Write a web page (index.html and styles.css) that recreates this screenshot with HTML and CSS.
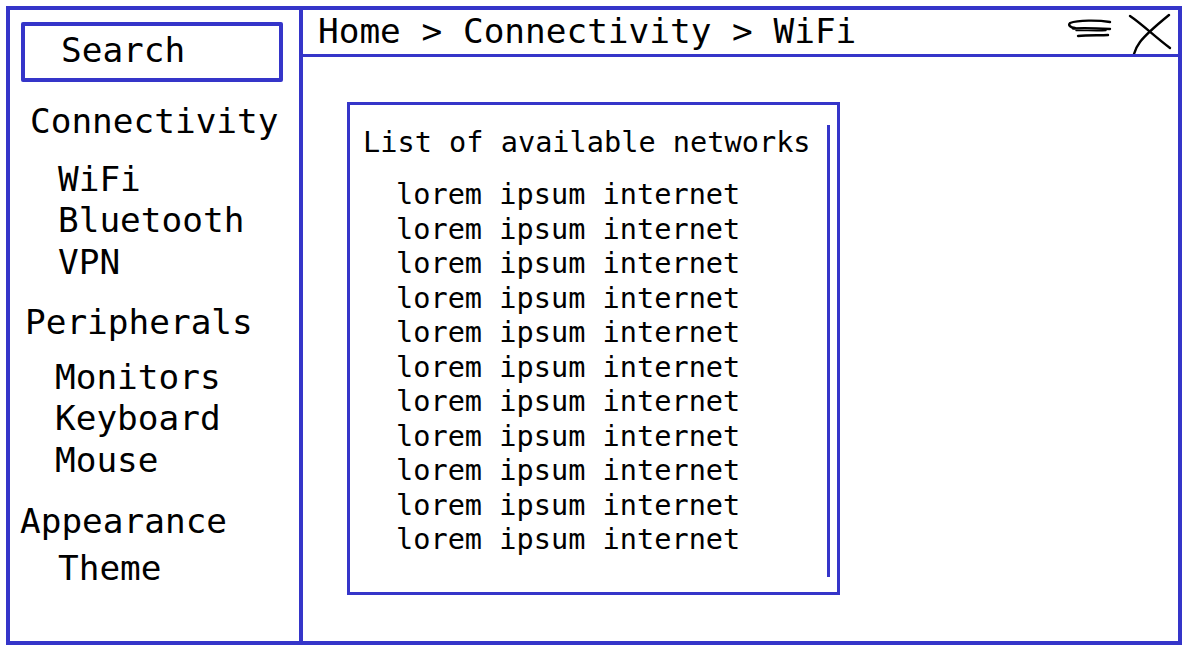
FILE: index.html
```html
<!DOCTYPE html>
<html lang="en">
<head>
<meta charset="utf-8">
<title>Settings - WiFi</title>
<link rel="stylesheet" href="styles.css">
</head>
<body>
<div class="frame">
  <aside class="sidebar">
    <div class="search">Search</div>
    <nav class="nav">
      <div class="group group-conn">
        <div class="group-title">Connectivity</div>
        <ul class="items">
          <li>WiFi</li>
          <li>Bluetooth</li>
          <li>VPN</li>
        </ul>
      </div>
      <div class="group group-peri">
        <div class="group-title">Peripherals</div>
        <ul class="items">
          <li>Monitors</li>
          <li>Keyboard</li>
          <li>Mouse</li>
        </ul>
      </div>
      <div class="group group-appe">
        <div class="group-title">Appearance</div>
        <ul class="items">
          <li>Theme</li>
        </ul>
      </div>
    </nav>
  </aside>
  <main class="main">
    <header class="header">
      <div class="crumbs">Home &gt; Connectivity &gt; WiFi</div>
      <svg class="icons" width="116" height="44" viewBox="0 0 116 44" aria-hidden="true">
        <g fill="none" stroke="#000" stroke-width="2.4" stroke-linecap="round" stroke-linejoin="round">
          <path d="M48 12 C36 10, 16 10, 8 13 C6 15, 8 17.5, 13 18"/>
          <path d="M11 18.5 C22 18, 38 18.5, 48 19"/>
          <path d="M14 20.5 C26 20.5, 36 21, 44 20.5" stroke-width="1.4"/>
          <path d="M16 26 C26 25, 38 25.5, 46 25"/>
          <path d="M68 6 C80 14, 92 26, 108 38"/>
          <path d="M107 5 C96 14, 84 24, 78 32 C75 36, 73 40, 72 44"/>
        </g>
      </svg>
    </header>
    <section class="content">
      <div class="networks">
        <div class="networks-inner">
          <div class="networks-title">List of available networks</div>
          <ul class="network-list">
            <li>lorem ipsum internet</li>
            <li>lorem ipsum internet</li>
            <li>lorem ipsum internet</li>
            <li>lorem ipsum internet</li>
            <li>lorem ipsum internet</li>
            <li>lorem ipsum internet</li>
            <li>lorem ipsum internet</li>
            <li>lorem ipsum internet</li>
            <li>lorem ipsum internet</li>
            <li>lorem ipsum internet</li>
            <li>lorem ipsum internet</li>
          </ul>
        </div>
      </div>
    </section>
  </main>
</div>
</body>
</html>
```

FILE: styles.css
```css
* { box-sizing: border-box; }

html, body {
  margin: 0;
  padding: 0;
  background: #fff;
}

body {
  font-family: "DejaVu Sans Mono", "Liberation Mono", monospace;
  color: #000;
}

ul {
  list-style: none;
  margin: 0;
  padding: 0;
}

.frame {
  margin: 6px 0 0 6px;
  width: 1176px;
  height: 639px;
  border: 4px solid #3535c9;
  display: flex;
}

/* Sidebar */
.sidebar {
  width: 293px;
  flex: none;
  border-right: 4px solid #3535c9;
  padding: 12px 0 0 11px;
  font-size: 34.4px;
}

.search {
  width: 262px;
  height: 60px;
  border: 4px solid #3535c9;
  border-radius: 2px;
  display: flex;
  align-items: center;
  padding: 0 0 4px 36px;
  line-height: 1;
}

.group-title,
.items li {
  line-height: 41px;
  white-space: nowrap;
}

.group-conn { margin-top: 19px; }
.group-conn .group-title { padding-left: 9px; margin-bottom: 17px; }
.group-conn .items { padding-left: 37px; }
.group-conn .items li:last-child { margin-top: 1px; }

.group-peri { margin-top: 19px; }
.group-peri .group-title { padding-left: 4px; margin-bottom: 14px; }
.group-peri .items { padding-left: 34px; }
.group-peri .items li:last-child { margin-top: 1px; }

.group-appe { margin-top: 20px; }
.group-appe .group-title { padding-left: 0; margin-left: -1px; margin-bottom: 6px; }
.group-appe .items { padding-left: 37px; }

/* Main */
.main {
  flex: 1;
  display: flex;
  flex-direction: column;
  min-width: 0;
}

.header {
  height: 47px;
  flex: none;
  border-bottom: 3px solid #3535c9;
  display: flex;
  align-items: center;
  padding-left: 15px;
  font-size: 34.4px;
}

.crumbs {
  line-height: 42px;
  padding-bottom: 2px;
  white-space: nowrap;
}

.icons {
  margin-left: auto;
  display: block;
  flex: none;
}

.content {
  flex: 1;
  padding: 45px 0 0 44px;
}

.networks {
  width: 493px;
  height: 493px;
  border: 3px solid #3535c9;
  padding: 20px 7px 15px 13px;
  font-size: 28.6px;
}

.networks-inner {
  height: 100%;
  border-right: 3px solid #3535c9;
}

.networks-title {
  line-height: 34px;
  white-space: nowrap;
}

.network-list {
  margin-top: 18px;
  padding-left: 33px;
}

.network-list li {
  line-height: 34.5px;
  white-space: nowrap;
}
```
